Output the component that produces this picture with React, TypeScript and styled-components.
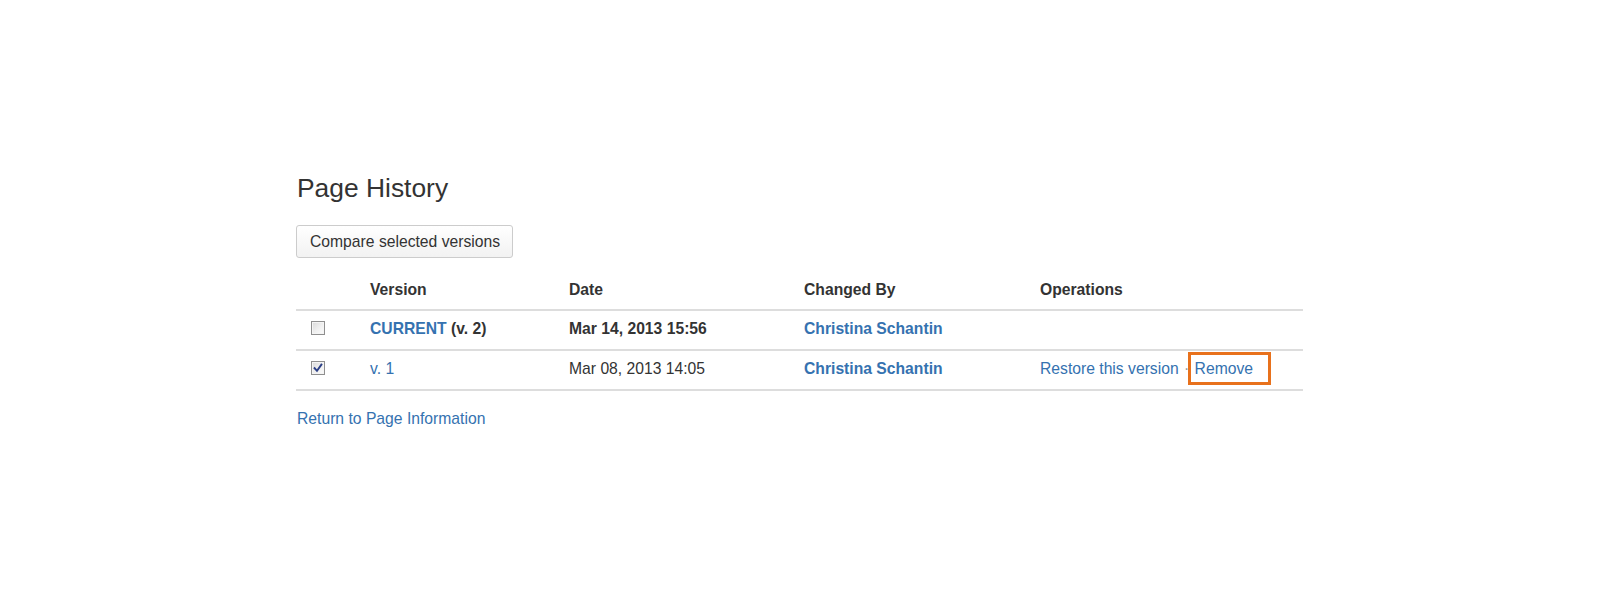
import React from "react";
import styled, { createGlobalStyle } from "styled-components";

const GlobalStyle = createGlobalStyle`
  html, body {
    margin: 0;
    padding: 0;
    background: #ffffff;
  }
  body {
    font-family: "Liberation Sans", Arial, sans-serif;
    color: #333333;
  }
`;

const Page = styled.main`
  width: 1007px;
  padding: 172px 0 0 296px;
  font-family: "Liberation Sans", Arial, sans-serif;
  font-size: 15.7px;
  line-height: 20px;
  color: #333333;
`;

const Heading = styled.h1`
  margin: 0 0 21px 1px;
  font-size: 26.4px;
  line-height: 32px;
  font-weight: normal;
  color: #333333;
`;

const Button = styled.button`
  display: inline-block;
  box-sizing: border-box;
  height: 33px;
  padding: 6px 12px 5px 13px;
  border: 1px solid #cccccc;
  border-radius: 3px;
  background: linear-gradient(to bottom, #ffffff 0%, #f2f2f2 100%);
  font-family: inherit;
  font-size: 15.7px;
  line-height: 20px;
  color: #333333;
  cursor: pointer;
`;

const Table = styled.table`
  width: 1007px;
  margin-top: 14px;
  border-collapse: separate;
  border-spacing: 0;
  table-layout: fixed;
`;

const HeadCell = styled.th`
  padding: 8px 11px 9px;
  text-align: left;
  font-weight: bold;
  color: #333333;
  border-bottom: 2px solid #dddddd;
  vertical-align: top;
`;

const Cell = styled.td<{ $bold?: boolean }>`
  padding: 8px 11px 10px;
  border-bottom: 2px solid #dddddd;
  vertical-align: top;
  white-space: nowrap;
  font-weight: ${(p) => (p.$bold ? "bold" : "normal")};
  color: #333333;
`;

const Link = styled.a<{ $bold?: boolean }>`
  color: #3572b0;
  text-decoration: none;
  font-weight: ${(p) => (p.$bold ? "bold" : "normal")};
  cursor: pointer;
`;

const Highlighted = styled(Link)`
  position: relative;
  &::after {
    content: "";
    position: absolute;
    left: -7px;
    right: -18px;
    top: -8px;
    bottom: -8px;
    border: 3px solid #e8711c;
    pointer-events: none;
  }
`;

const Separator = styled.span`
  color: #999999;
  margin: 0 1px;
`;

const Box = styled.span<{ $checked?: boolean }>`
  display: block;
  box-sizing: border-box;
  width: 14px;
  height: 14px;
  margin: 2px 0 0 4px;
  border: 1px solid #8f8f8f;
  background: linear-gradient(135deg, #d9d9d9 0%, #f0f0f0 55%, #fbfbfb 100%);
  box-shadow: inset 0 0 0 1px #f4f4f4;
  svg {
    display: block;
  }
`;

const Footer = styled.div`
  margin-top: 18px;
  padding-left: 1px;
`;

function Checkbox({ checked }: { checked?: boolean }) {
  return (
    <Box $checked={checked} role="checkbox" aria-checked={checked ? "true" : "false"}>
      {checked && (
        <svg width="12" height="12" viewBox="0 0 12 12">
          <path
            d="M2.6 6.2 L5 8.8 L9.4 2.6"
            fill="none"
            stroke="#2b3f86"
            strokeWidth="1.9"
            strokeLinecap="square"
          />
        </svg>
      )}
    </Box>
  );
}

export default function App() {
  return (
    <>
      <GlobalStyle />
      <Page>
        <Heading>Page History</Heading>
        <Button>Compare selected versions</Button>
        <Table>
          <colgroup>
            <col style={{ width: 63 }} />
            <col style={{ width: 199 }} />
            <col style={{ width: 235 }} />
            <col style={{ width: 236 }} />
            <col style={{ width: 274 }} />
          </colgroup>
          <thead>
            <tr>
              <HeadCell></HeadCell>
              <HeadCell>Version</HeadCell>
              <HeadCell>Date</HeadCell>
              <HeadCell>Changed By</HeadCell>
              <HeadCell>Operations</HeadCell>
            </tr>
          </thead>
          <tbody>
            <tr>
              <Cell>
                <Checkbox />
              </Cell>
              <Cell $bold>
                <Link $bold>CURRENT</Link> (v. 2)
              </Cell>
              <Cell $bold>Mar 14, 2013 15:56</Cell>
              <Cell>
                <Link $bold>Christina Schantin</Link>
              </Cell>
              <Cell></Cell>
            </tr>
            <tr>
              <Cell>
                <Checkbox checked />
              </Cell>
              <Cell>
                <Link>v. 1</Link>
              </Cell>
              <Cell>Mar 08, 2013 14:05</Cell>
              <Cell>
                <Link $bold>Christina Schantin</Link>
              </Cell>
              <Cell>
                <Link>Restore this version</Link> <Separator>·</Separator>{" "}
                <Highlighted>Remove</Highlighted>
              </Cell>
            </tr>
          </tbody>
        </Table>
        <Footer>
          <Link>Return to Page Information</Link>
        </Footer>
      </Page>
    </>
  );
}
